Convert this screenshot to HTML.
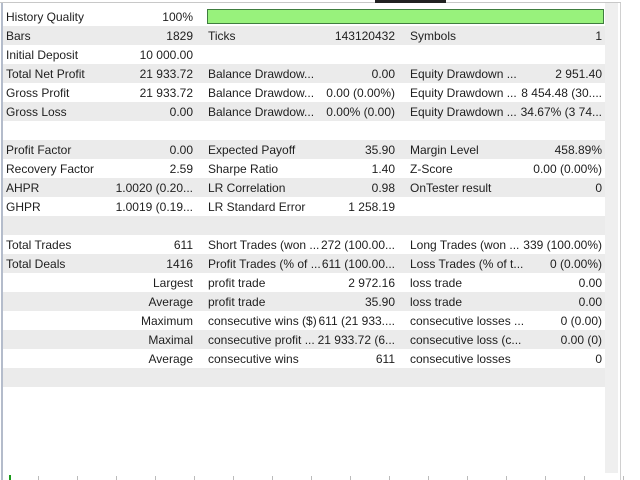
<!DOCTYPE html>
<html><head><style>
*{margin:0;padding:0;box-sizing:border-box}
body{width:640px;height:480px;background:#fff;position:relative;overflow:hidden;font-family:"Liberation Sans",sans-serif;font-size:12px;color:#1e1e1e}
.row{position:absolute;left:3px;width:602px;height:19px}
.g{background:#ebebeb}
.c{position:absolute;top:3px;white-space:nowrap}
.l1{left:3px}.r1{right:412px;text-align:right}
.l2{left:205px}.r2{right:210px;text-align:right}
.l3{left:407px}.r3{right:3px;text-align:right}
</style></head><body>
<div style="position:absolute;left:0;top:2px;width:621px;height:1px;background:#c8c8c8"></div>
<div style="position:absolute;left:375px;top:0;width:71px;height:3px;background:#222"></div>
<div style="position:absolute;left:1px;top:3px;width:2px;height:477px;background:#b4bccb"></div>
<div style="position:absolute;left:605px;top:3px;width:13px;height:470px;background:#efefef"></div>
<div style="position:absolute;left:620px;top:3px;width:1px;height:477px;background:#d0d0d0"></div>

<div class="row" style="top:7px"><span class="c l1">History Quality</span><span class="c r1">100%</span>
<div style="position:absolute;left:204px;top:2px;width:397px;height:15px;background:#98f27c;border:1px solid #3f7d3f"></div></div>
<div class="row g" style="top:26px"><span class="c l1">Bars</span><span class="c r1">1829</span><span class="c l2">Ticks</span><span class="c r2">143120432</span><span class="c l3">Symbols</span><span class="c r3">1</span></div>
<div class="row" style="top:45px"><span class="c l1">Initial Deposit</span><span class="c r1">10 000.00</span></div>
<div class="row g" style="top:64px"><span class="c l1">Total Net Profit</span><span class="c r1">21 933.72</span><span class="c l2">Balance Drawdow...</span><span class="c r2">0.00</span><span class="c l3">Equity Drawdown ...</span><span class="c r3">2 951.40</span></div>
<div class="row" style="top:83px"><span class="c l1">Gross Profit</span><span class="c r1">21 933.72</span><span class="c l2">Balance Drawdow...</span><span class="c r2">0.00 (0.00%)</span><span class="c l3">Equity Drawdown ...</span><span class="c r3">8 454.48 (30....</span></div>
<div class="row g" style="top:102px"><span class="c l1">Gross Loss</span><span class="c r1">0.00</span><span class="c l2">Balance Drawdow...</span><span class="c r2">0.00% (0.00)</span><span class="c l3">Equity Drawdown ...</span><span class="c r3">34.67% (3 74...</span></div>
<div class="row" style="top:121px"></div>
<div class="row g" style="top:140px"><span class="c l1">Profit Factor</span><span class="c r1">0.00</span><span class="c l2">Expected Payoff</span><span class="c r2">35.90</span><span class="c l3">Margin Level</span><span class="c r3">458.89%</span></div>
<div class="row" style="top:159px"><span class="c l1">Recovery Factor</span><span class="c r1">2.59</span><span class="c l2">Sharpe Ratio</span><span class="c r2">1.40</span><span class="c l3">Z-Score</span><span class="c r3">0.00 (0.00%)</span></div>
<div class="row g" style="top:178px"><span class="c l1">AHPR</span><span class="c r1">1.0020 (0.20...</span><span class="c l2">LR Correlation</span><span class="c r2">0.98</span><span class="c l3">OnTester result</span><span class="c r3">0</span></div>
<div class="row" style="top:197px"><span class="c l1">GHPR</span><span class="c r1">1.0019 (0.19...</span><span class="c l2">LR Standard Error</span><span class="c r2">1 258.19</span></div>
<div class="row g" style="top:216px"></div>
<div class="row" style="top:235px"><span class="c l1">Total Trades</span><span class="c r1">611</span><span class="c l2">Short Trades (won ...</span><span class="c r2">272 (100.00...</span><span class="c l3">Long Trades (won ...</span><span class="c r3">339 (100.00%)</span></div>
<div class="row g" style="top:254px"><span class="c l1">Total Deals</span><span class="c r1">1416</span><span class="c l2">Profit Trades (% of ...</span><span class="c r2">611 (100.00...</span><span class="c l3">Loss Trades (% of t...</span><span class="c r3">0 (0.00%)</span></div>
<div class="row" style="top:273px"><span class="c r1">Largest</span><span class="c l2">profit trade</span><span class="c r2">2 972.16</span><span class="c l3">loss trade</span><span class="c r3">0.00</span></div>
<div class="row g" style="top:292px"><span class="c r1">Average</span><span class="c l2">profit trade</span><span class="c r2">35.90</span><span class="c l3">loss trade</span><span class="c r3">0.00</span></div>
<div class="row" style="top:311px"><span class="c r1">Maximum</span><span class="c l2">consecutive wins ($)</span><span class="c r2">611 (21 933....</span><span class="c l3">consecutive losses ...</span><span class="c r3">0 (0.00)</span></div>
<div class="row g" style="top:330px"><span class="c r1">Maximal</span><span class="c l2">consecutive profit ...</span><span class="c r2">21 933.72 (6...</span><span class="c l3">consecutive loss (c...</span><span class="c r3">0.00 (0)</span></div>
<div class="row" style="top:349px"><span class="c r1">Average</span><span class="c l2">consecutive wins</span><span class="c r2">611</span><span class="c l3">consecutive losses</span><span class="c r3">0</span></div>
<div class="row g" style="top:368px"></div>
<div style="position:absolute;left:9px;top:475px;width:2px;height:5px;background:#1a9a1a"></div>
<div style="position:absolute;left:0;top:476px;width:640px;height:4px;background:repeating-linear-gradient(90deg,transparent 0 38px,#bbb 38px 39px)"></div>
</body></html>
